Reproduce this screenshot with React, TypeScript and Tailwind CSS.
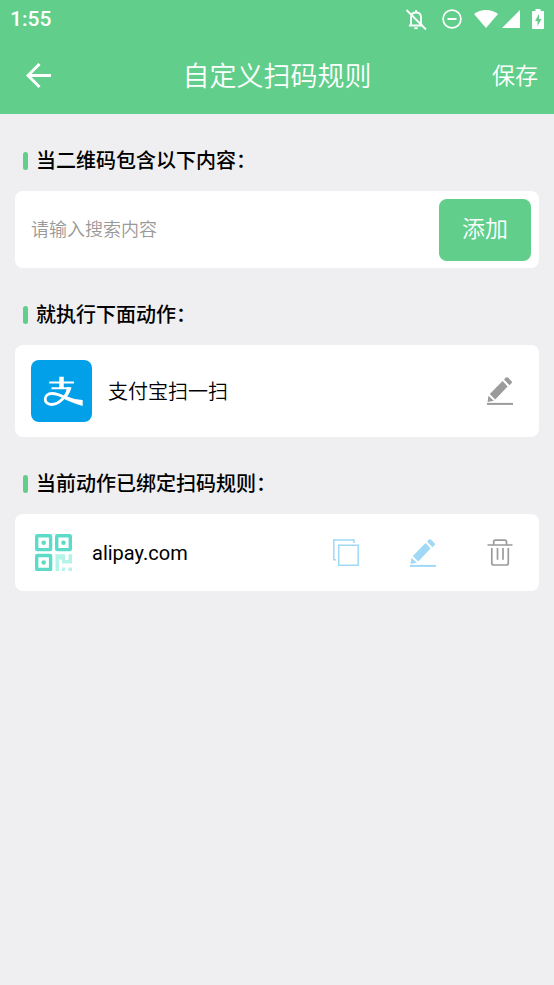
import React from 'react';

const StatusIcons = () => (
  <div className="flex items-center">
    <svg className="mr-3.5 h-6 w-6" viewBox="0 0 24 24" fill="none" stroke="white" strokeWidth="1.800">
      <path d="M5 18.500H19M7 18V10.500C7 7.300 9 5.500 12 5.500S17 7.300 17 10.500V17.500M12 5.500V3M2.500 3L22 22.500" />
      <path d="M10.300 21.200H13.700" />
    </svg>
    <svg className="mr-3 h-5 w-5" viewBox="0 0 20 20" fill="none" stroke="white">
      <circle cx="10" cy="10" r="8.900" strokeWidth="1.700" />
      <path d="M5.500 10H14.500" strokeWidth="2" />
    </svg>
    <svg className="mr-1 h-[18px] w-6" viewBox="0 0 24 18" fill="white">
      <path d="M0 4C7-1.300 17-1.300 24 4L12 18Z" />
    </svg>
    <svg className="mr-3 h-[18px] w-[18px]" viewBox="0 0 18 18" fill="white">
      <path d="M18 0V18H0Z" />
    </svg>
    <svg className="h-5 w-3" viewBox="0 0 12 20" fill="white">
      <path fillRule="evenodd" d="M3.500 0H8.500V2H11Q12 2 12 3V19Q12 20 11 20H1Q0 20 0 19V3Q0 2 1 2H3.500ZM7 5L3 12H5.500V17L9.500 10H7Z" />
    </svg>
  </div>
);

const BackIcon = () => (
  <svg className="h-[26px] w-[26px]" viewBox="0 0 26 26" fill="none" stroke="white" strokeWidth="3">
    <path d="M25 12.500H2.500M13.500 1L2 12.500L13.500 24" />
  </svg>
);

const PencilIcon = () => (
  <svg className="h-7 w-[26px]" viewBox="0 0 26 28" fill="currentColor">
    <path d="M.6 25L1.400 18.700L6.800 23.800ZM2.800 17L15.600 4L20.600 9.400L8.200 22.400ZM17 2.500L18.900 .6Q20 -.3 21 .6L24.600 4.200Q25.400 5.200 24.500 6.200L22.500 8.200Z" />
    <path d="M0 25.900H26V27.900H0Z" />
  </svg>
);

const CopyIcon = () => (
  <svg className="h-7 w-[26px]" viewBox="0 0 26 28" fill="none" stroke="currentColor" strokeWidth="1.500">
    <path d="M21 4V1H.8V20.700H3" />
    <path d="M5.700 6.200H25.200V26.200H5.700Z" />
  </svg>
);

const TrashIcon = () => (
  <svg className="h-7 w-[26px]" viewBox="0 0 26 28" fill="none" stroke="currentColor" strokeWidth="1.700">
    <path d="M.5 6H25.500M6.700 6V3Q6.700 1.200 8.500 1.200H17.500Q19.500 1.200 19.500 3V6M4.800 9V24Q4.800 26 6.800 26H19.300Q21.300 26 21.300 24V9M10.500 9V20.700M16 9V20.700" />
  </svg>
);

const AlipayIcon = () => (
  <svg className="h-[62px] w-[61px] rounded-lg bg-[#01a0e9]" viewBox="0 0 61 62" fill="none" stroke="white">
    <path d="M18.300 22.500H43M20.500 28.200H38" strokeWidth="2" />
    <path d="M30.500 16.700V28" strokeWidth="4.500" />
    <path d="M38 27.500C36 36 28 44.500 20.500 44.500C12 44.500 12 33.500 21 33.500C27 33.500 32 36.500 37 39" strokeWidth="2.800" />
    <path fill="white" stroke="none" d="M36 27.200H40.500C39.700 31 38 34 36.200 36.500C41 38.500 46 39.700 51.700 40V46C44 43.800 37 40.800 31.500 38.200C34 35 35.500 31 36 27.200Z" />
  </svg>
);

const QrIcon = () => (
  <svg className="h-[37px] w-[37px]" viewBox="0 0 37 37">
    <g fill="none" stroke="#5cdcc8" strokeWidth="3.400">
      <rect x="1.700" y="1.700" width="13.900" height="13.900" rx=".5" />
      <rect x="21.700" y="1.700" width="13.600" height="13.900" rx=".5" />
      <rect x="1.700" y="21.500" width="13.900" height="13.900" rx=".5" />
    </g>
    <g fill="#5cdcc8">
      <circle cx="8.700" cy="8.700" r="2.300" />
      <circle cx="28.500" cy="8.700" r="2.300" />
      <circle cx="8.700" cy="28.500" r="2.300" />
    </g>
    <path fill="#b5f3e9" d="M20.500 20.200H30V26H33.500V20.200H37V29.500H27V25.500H24V37H20.500ZM27 33.500H30V37H27ZM33.500 33.500H37V37H33.500Z" />
  </svg>
);

const SectionTitle = ({ children }: { children: React.ReactNode }) => (
  <h2 className="flex h-[77px] items-center gap-2 px-2 pt-4 text-[20px] leading-6 font-medium">
    <span className="h-[18px] w-[5px] rounded-sm bg-[#61cf8b]" />
    {children}
  </h2>
);

export default function App() {
  return (
    <div className="min-h-screen bg-[#efeff1] font-['Roboto','Noto_Sans_CJK_SC',sans-serif] text-black">
      <header className="bg-[#61cf8b] text-white">
        {/* Status bar */}
        <div className="flex h-[38px] items-center justify-between px-2.5">
          <span className="pt-0.5 text-[21px] font-medium">1:55</span>
          <StatusIcons />
        </div>
        {/* App bar */}
        <div className="grid h-[76px] grid-cols-[1fr_auto_1fr] items-center px-4">
          <button aria-label="返回" className="justify-self-start pl-2.5">
            <BackIcon />
          </button>
          <h1 className="pt-0.5 text-[27px] font-[350]">自定义扫码规则</h1>
          <button className="justify-self-end pt-0.5 text-[23px] font-[350]">保存</button>
        </div>
      </header>

      <main className="px-[15px]">
        <SectionTitle>
          <label htmlFor="keyword">当二维码包含以下内容：</label>
        </SectionTitle>
        <form className="flex h-[77px] items-center rounded-lg bg-white pr-2 pl-4">
          <input
            id="keyword"
            type="text"
            placeholder="请输入搜索内容"
            className="min-w-0 flex-1 text-[18px] font-[350] outline-none placeholder:text-[#999999]"
          />
          <button type="button" className="h-[62px] w-[92px] rounded-lg bg-[#61cf8b] pt-0.5 text-[23px] font-[350] text-white">
            添加
          </button>
        </form>

        <SectionTitle>就执行下面动作：</SectionTitle>
        <div className="flex h-[92px] items-center rounded-lg bg-white pr-[26px] pl-4">
          <AlipayIcon />
          <span className="ml-4 flex-1 pt-0.5 text-[20px] font-[350]">支付宝扫一扫</span>
          <button aria-label="编辑动作" className="text-[#9b9b9b]">
            <PencilIcon />
          </button>
        </div>

        <SectionTitle>当前动作已绑定扫码规则：</SectionTitle>
        <div className="flex h-[77px] items-center rounded-lg bg-white pr-[26px] pl-5">
          <QrIcon />
          <span className="ml-5 flex-1 text-[20px]">alipay.com</span>
          <div className="flex gap-[51px]">
            <button aria-label="复制" className="text-[#9fd9f6]">
              <CopyIcon />
            </button>
            <button aria-label="编辑规则" className="text-[#9fd9f6]">
              <PencilIcon />
            </button>
            <button aria-label="删除" className="text-[#9b9b9b]">
              <TrashIcon />
            </button>
          </div>
        </div>
      </main>
    </div>
  );
}
